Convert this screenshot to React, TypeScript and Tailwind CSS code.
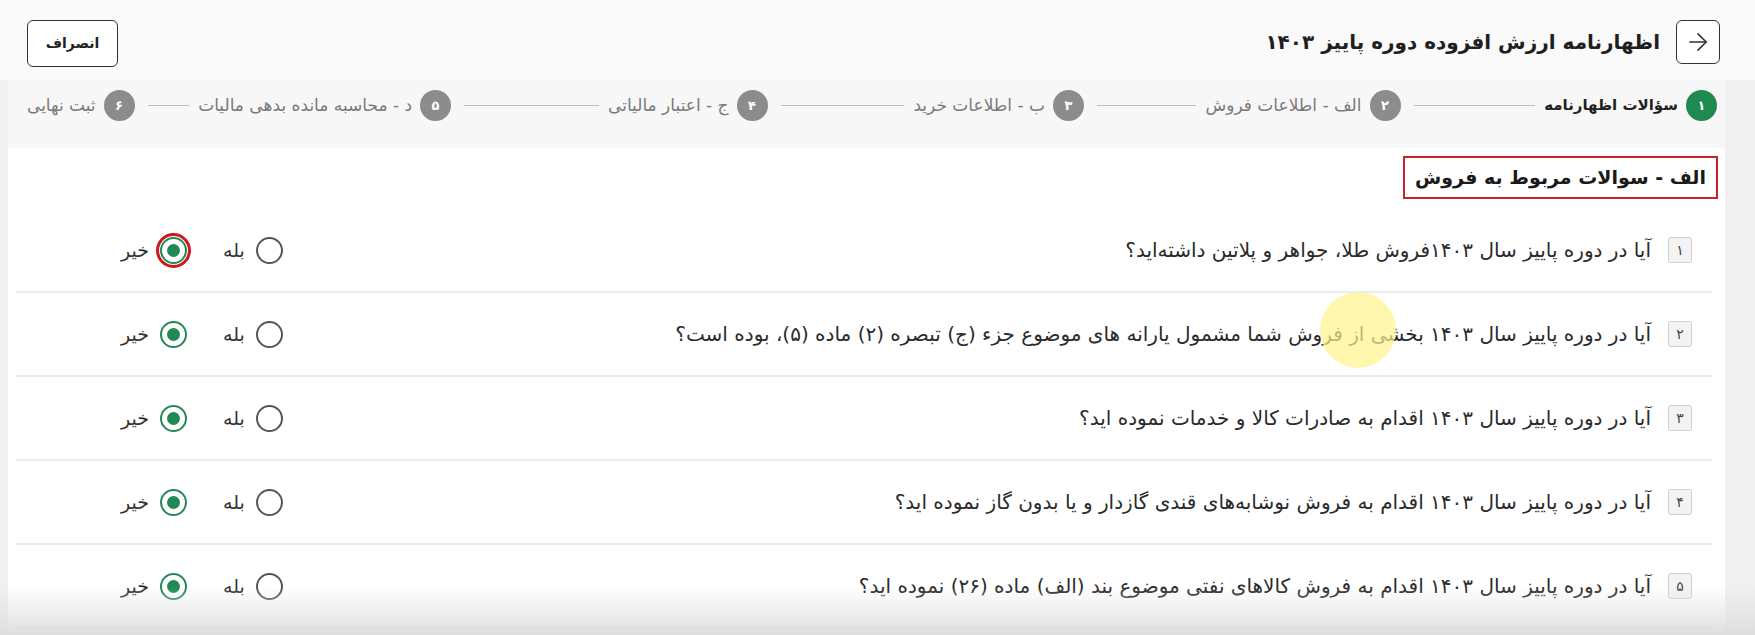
import { ArrowRight } from 'lucide-react';

const FONT = { fontFamily: '"DejaVu Sans", "Noto Sans", sans-serif' };

const steps = [
  { n: '۱', label: 'سؤالات اظهارنامه' },
  { n: '۲', label: 'الف - اطلاعات فروش' },
  { n: '۳', label: 'ب - اطلاعات خرید' },
  { n: '۴', label: 'ج - اعتبار مالیاتی' },
  { n: '۵', label: 'د - محاسبه مانده بدهی مالیات' },
  { n: '۶', label: 'ثبت نهایی' },
];

const questions = [
  'آیا در دوره پاییز سال ۱۴۰۳فروش طلا، جواهر و پلاتین داشته‌اید؟',
  'آیا در دوره پاییز سال ۱۴۰۳ بخشی از فروش شما مشمول یارانه های موضوع جزء (ج) تبصره (۲) ماده (۵)، بوده است؟',
  'آیا در دوره پاییز سال ۱۴۰۳ اقدام به صادرات کالا و خدمات نموده اید؟',
  'آیا در دوره پاییز سال ۱۴۰۳ اقدام به فروش نوشابه‌های قندی گازدار و یا بدون گاز نموده اید؟',
  'آیا در دوره پاییز سال ۱۴۰۳ اقدام به فروش کالاهای نفتی موضوع بند (الف) ماده (۲۶) نموده اید؟',
];

const digits = ['۱', '۲', '۳', '۴', '۵'];

function Radio({ checked, label, highlight }: { checked: boolean; label: string; highlight?: boolean }) {
  return (
    <label className="flex items-center gap-[11px]">
      <span
        className={
          checked
            ? 'relative flex h-[27px] w-[27px] items-center justify-center rounded-full border-2 border-[#1f8a55] bg-white'
            : 'relative flex h-[27px] w-[27px] items-center justify-center rounded-full border-2 border-[#555] bg-white'
        }
      >
        {checked && <span className="h-[13px] w-[13px] rounded-full bg-[#1f8a55]" />}
        {highlight && (
          <span className="absolute -inset-[6px] rounded-full border-[3px] border-[#d0161d]" />
        )}
      </span>
      <span className="text-[19px] text-[#333]">{label}</span>
    </label>
  );
}

export default function App() {
  return (
    <div dir="rtl" style={FONT} className="relative h-[635px] w-full overflow-hidden bg-[#f0f0f0]">
      {/* Header */}
      <div className="flex h-[80px] items-start justify-between bg-[#fafafa] pl-[27px] pr-[35px] pt-[20px]">
        <div className="flex items-center gap-[16px]">
          <button className="flex h-[44px] w-[44px] items-center justify-center rounded-md border-[1.5px] border-[#333] bg-white text-[#333]">
            <ArrowRight size={28} strokeWidth={1.4} />
          </button>
          <h1 className="text-[20px] font-bold text-[#1f1f1f]">اظهارنامه ارزش افزوده دوره پاییز ۱۴۰۳</h1>
        </div>
        <button className="h-[47px] w-[91px] rounded-md border-[1.5px] border-[#333] bg-white text-[14px] font-bold text-[#222]">
          انصراف
        </button>
      </div>

      {/* Card */}
      <div className="ml-2 mr-[30px] h-[555px] bg-white">
        {/* Stepper */}
        <div className="flex h-[68px] items-start bg-[#f7f7f7] pl-[19px] pr-[8px] pt-[10px]">
          {steps.map((s, i) => (
            <div key={s.n} className={i < steps.length - 1 ? 'flex flex-1 items-center' : 'flex items-center'}>
              <div className="flex items-center gap-[8px]">
                <span
                  className={
                    i === 0
                      ? 'flex h-[31px] w-[31px] items-center justify-center rounded-full bg-[#1e8a50] text-[13px] font-bold text-white'
                      : 'flex h-[31px] w-[31px] items-center justify-center rounded-full bg-[#8c8c8c] text-[13px] font-bold text-white'
                  }
                >
                  {s.n}
                </span>
                <span
                  className={
                    i === 0
                      ? 'whitespace-nowrap text-[15px] font-bold text-[#222]'
                      : 'whitespace-nowrap text-[17px] text-[#7a7a7a]'
                  }
                >
                  {s.label}
                </span>
              </div>
              {i < steps.length - 1 && <span className="ml-[13px] mr-[9px] h-px flex-1 bg-[#bdbdbd]" />}
            </div>
          ))}
        </div>

        {/* Section heading */}
        <div className="mt-2 flex pr-[7px]">
          <div className="flex h-[43px] items-center border-[2.5px] border-[#c8232c] px-[10px]">
            <h2 className="text-[19px] font-bold text-[#1a1a1a]">الف - سوالات مربوط به فروش</h2>
          </div>
        </div>

        {/* Questions */}
        <div className="mt-[10px] pl-2 pr-[13px]">
          {questions.map((q, i) => (
            <div key={i} className="flex h-[84px] items-center border-b-2 border-[#ececec] pl-[105px] pr-[20px]">
              <span className="flex h-[26px] w-[24px] items-center justify-center rounded-[3px] border border-[#cfcfcf] bg-[#f3f3f3] text-[14px] text-[#444]">
                {digits[i]}
              </span>
              <p className="mr-[17px] flex-1 text-[20px] text-[#2b2b2b]">{q}</p>
              <div className="flex items-center gap-[36px]">
                <Radio checked={false} label="بله" />
                <Radio checked label="خیر" highlight={i === 0} />
              </div>
            </div>
          ))}
        </div>
      </div>

      {/* Cursor highlight */}
      <span className="pointer-events-none absolute left-[1320px] top-[292px] h-[76px] w-[76px] rounded-full bg-[#fff48a]/70" />

      {/* Bottom fade */}
      <div className="pointer-events-none absolute inset-x-0 bottom-0 h-[48px] bg-gradient-to-b from-transparent to-[#dedede]" />
    </div>
  );
}
